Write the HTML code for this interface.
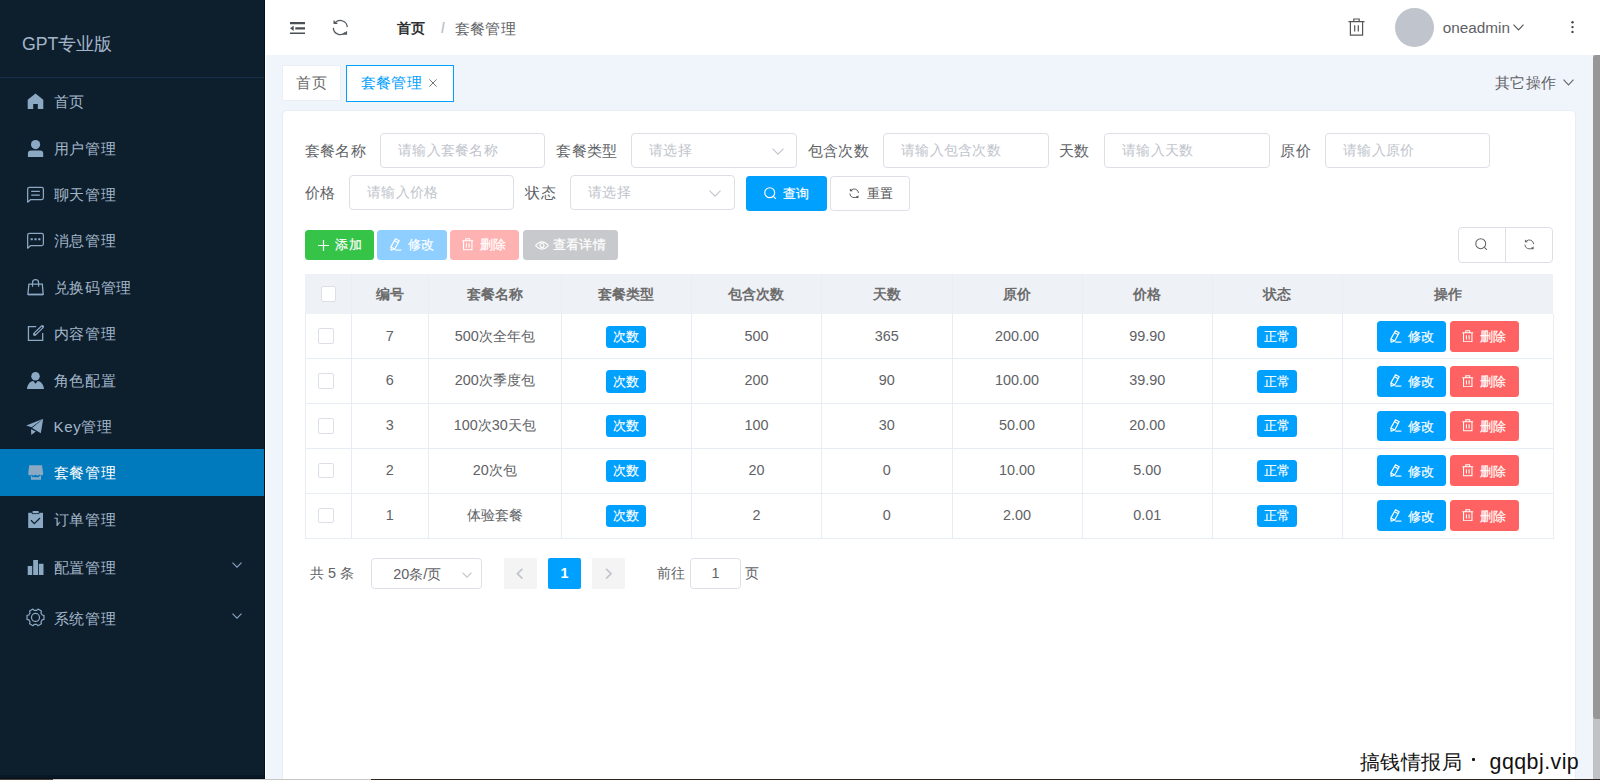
<!DOCTYPE html>
<html lang="zh">
<head>
<meta charset="utf-8">
<title>GPT专业版</title>
<style>
*{box-sizing:border-box;margin:0;padding:0}
html,body{width:1600px;height:780px;overflow:hidden}
body{font-family:"Liberation Sans",sans-serif;background:#f0f4fb;color:#606266;position:relative;font-size:14.4px}
svg{display:block}
.abs{position:absolute}
/* ---------- sidebar ---------- */
#side{position:absolute;left:0;top:0;width:265px;height:780px;background:#0d1e2d}
#logo{position:absolute;left:0;top:0;width:265px;height:78px;border-bottom:1px solid #17304a;color:#a3b6c9;font-size:17.7px;line-height:78px;padding-left:22px;padding-top:5px}
.mi{position:absolute;left:0;width:265px;height:46.4px;color:#a3b6c9;font-size:15px;letter-spacing:0.65px}
.mi.act{background:#0079bd;color:#fff}
.mi .ic{position:absolute;left:27.3px;top:50%;width:16.4px;height:16.4px;margin-top:-7.4px;color:#8aa7c4}
.mi .tx{position:absolute;left:53.6px;top:1.6px;height:100%;display:flex;align-items:center;white-space:nowrap}
.mi .arr{position:absolute;left:232px;top:50%;width:10px;height:6px;margin-top:-5px;color:#8aa7c4}
/* ---------- header ---------- */
#head{position:absolute;left:265px;top:0;width:1335px;height:55px;background:#fff}
#head .hi{position:absolute;color:#4a4a4a}
#bc1{position:absolute;left:131.6px;top:0;height:55px;line-height:57px;font-size:14px;letter-spacing:0.6px;font-weight:bold;color:#303133;white-space:nowrap}
#bcs{position:absolute;left:176px;top:0;height:55px;line-height:56px;font-size:14px;font-weight:bold;color:#c0c4cc}
#bc2{position:absolute;left:189.5px;top:0;height:55px;line-height:57px;font-size:15px;letter-spacing:0.4px;color:#606266;white-space:nowrap}
#avatar{position:absolute;left:1130px;top:7.9px;width:38.8px;height:39px;border-radius:50%;background:#c0c4cc}
#uname{position:absolute;left:1177.8px;top:0;height:55px;line-height:55px;font-size:15.3px;color:#606266;white-space:nowrap}
/* ---------- tabs ---------- */
.tab{position:absolute;top:65px;height:36.5px;background:#fff;font-size:15px;letter-spacing:0.35px;display:flex;align-items:center;white-space:nowrap}
/* ---------- card ---------- */
#card{position:absolute;left:281.5px;top:109.6px;width:1294.5px;height:680px;background:#fff;border-radius:5px;border:1px solid #e9edf6}
.lb{position:absolute;height:34.3px;line-height:36.4px;font-size:15px;letter-spacing:0.4px;color:#606266;white-space:nowrap}
.inp{position:absolute;border:1px solid #dcdfe6;border-radius:4px;background:#fff;font-size:14px;letter-spacing:0.25px;color:#c0c4cc;line-height:33px;padding-left:17px;white-space:nowrap}
.inp svg{position:absolute;right:12.5px;top:13.5px}
.btn{position:absolute;border-radius:3.5px;color:#fff;font-size:13px;letter-spacing:0.3px;white-space:nowrap;display:flex;align-items:center}
.btn .t{position:absolute;top:1px;height:100%;display:flex;align-items:center;-webkit-text-stroke:0.2px currentColor}
.btn svg{position:absolute}
/* table */
#thead{position:absolute;left:305px;top:274px;width:1248px;height:40px;background:#eef1f6}
.th{position:absolute;top:274px;height:40px;line-height:41px;text-align:center;font-weight:bold;font-size:14px;color:#6c6c6c;white-space:nowrap}
.td{position:absolute;height:44.8px;line-height:45.4px;text-align:center;font-size:14.4px;color:#606266;white-space:nowrap}
.vl{position:absolute;top:313.8px;width:1px;height:225.2px;background:#e8ecf5}
.vlh{position:absolute;top:274px;width:1px;height:40px;background:#e9edf4}
.hl{position:absolute;left:305px;width:1248px;height:1px;background:#e8ecf5}
.cb{position:absolute;width:15.5px;height:15.5px;border:1px solid #dcdfe6;border-radius:2px;background:#fff}
.tag{position:absolute;width:39.8px;height:22px;border-radius:3.5px;background:#00a0ff;color:#fff;font-size:13px;letter-spacing:0.3px;line-height:22.6px;text-align:center;white-space:nowrap;-webkit-text-stroke:0.15px #fff}
/* pagination */
.pg{position:absolute;top:558px;height:30.7px;line-height:31px;font-size:14.4px;color:#606266;white-space:nowrap}
</style>
</head>
<body>
<!-- SIDEBAR -->
<div id="side">
  <div id="logo">GPT专业版</div>
  <!--MENU-->
  <div class="mi" style="top:78.0px"><span class="tx">首页</span></div>
  <div class="mi" style="top:124.4px"><span class="tx">用户管理</span></div>
  <div class="mi" style="top:170.8px"><span class="tx">聊天管理</span></div>
  <div class="mi" style="top:217.2px"><span class="tx">消息管理</span></div>
  <div class="mi" style="top:263.6px"><span class="tx">兑换码管理</span></div>
  <div class="mi" style="top:310.0px"><span class="tx">内容管理</span></div>
  <div class="mi" style="top:356.4px"><span class="tx">角色配置</span></div>
  <div class="mi" style="top:402.8px"><span class="tx">Key管理</span></div>
  <div class="mi act" style="top:449.2px"><span class="tx">套餐管理</span></div>
  <div class="mi" style="top:495.6px"><span class="tx">订单管理</span></div>
  <div class="mi" style="top:542.0px;height:50.4px"><span class="tx">配置管理</span><span class="arr"><svg viewBox="0 0 10 6" width="100%" height="100%"><path fill="none" stroke="currentColor" stroke-width="1.1" d="M0.5 0.6 L5 5.2 L9.5 0.6"/></svg></span></div>
  <div class="mi" style="top:592.4px;height:50.4px"><span class="tx">系统管理</span><span class="arr"><svg viewBox="0 0 10 6" width="100%" height="100%"><path fill="none" stroke="currentColor" stroke-width="1.1" d="M0.5 0.6 L5 5.2 L9.5 0.6"/></svg></span></div>
  <svg class="abs" style="left:0;top:0" width="265" height="780" viewBox="0 0 265 780"><path fill="#8ca9c4" d="M27.7 99.8 L35.5 93.5 L43.3 99.8 V109 H37.8 V104 H33.2 V109 H27.7 Z"/><circle cx="35.55" cy="144.55" r="4.6" fill="#8ca9c4"/><path fill="#8ca9c4" d="M27.9 157 V153.6 Q27.9 150.6 30.9 150.6 H40.2 Q43.2 150.6 43.2 153.6 V157 Z"/><path fill="none" stroke="#8ca9c4" stroke-width="1.25" stroke-linejoin="round" d="M27.65 202.2 V189.2 Q27.65 187.4 29.45 187.4 H41.6 Q43.4 187.4 43.4 189.2 V197.8 Q43.4 199.6 41.6 199.6 H30.7 Z"/><path fill="none" stroke="#8ca9c4" stroke-width="1.3"  d="M31.2 191.4 H39.8 M31.2 195.2 H39.8"/><path fill="none" stroke="#8ca9c4" stroke-width="1.25" stroke-linejoin="round" d="M27.65 248.2 V235.2 Q27.65 233.4 29.45 233.4 H41.6 Q43.4 233.4 43.4 235.2 V243.8 Q43.4 245.6 41.6 245.6 H30.7 Z"/><path fill="#8ca9c4" d="M30.6 238.2 H32.8 V240.3 H30.6 Z M34.4 238.2 H36.6 V240.3 H34.4 Z M38.2 238.2 H40.4 V240.3 H38.2 Z"/><path fill="none" stroke="#8ca9c4" stroke-width="1.3"  d="M28.9 284.2 H42.3 L43.2 294.4 H27.9 Z"/><path fill="none" stroke="#8ca9c4" stroke-width="1.6"  d="M28 294.6 H43.1"/><path fill="none" stroke="#8ca9c4" stroke-width="1.2"  d="M32.5 286.8 V282.7 A3.05 3.05 0 0 1 38.6 282.7 V286.8"/><path fill="none" stroke="#8ca9c4" stroke-width="1.3"  d="M36.2 326.6 H28.45 V340.4 H42.7 V333"/><path stroke="#8ca9c4" stroke-width="3.5" stroke-linecap="round" d="M34.9 334 L42.3 326.8"/><path stroke="#0d1e2d" stroke-width="1.1" stroke-linecap="round" d="M35.5 333.4 L41.8 327.3"/><path fill="#8ca9c4" d="M33.2 335.6 L33.6 333.2 L35.8 335.2 Z"/><circle cx="35.5" cy="376.2" r="4.25" fill="#8ca9c4"/><path fill="#8ca9c4" d="M27 389 C27.2 384.5 30 381.4 33.3 380.9 L35.5 383.8 L37.7 380.9 C41 381.4 43.8 384.5 44 389 Z"/><path fill="#8ca9c4" d="M26.2 425.5 L43.2 418.8 L31.6 427.3 Z"/><path fill="#8ca9c4" d="M32.1 427.9 L43.2 418.8 L40.8 433.2 Z"/><path fill="#8ca9c4" d="M31 429.3 L31.3 435 L35.8 431.4 Z"/><path fill="#8ca9c4" d="M29.2 465.2 H42 L43.2 473.6 Q43.2 475.5 41.5 475.5 Q40.2 475.5 39.5 474.4 Q38.8 475.5 37.5 475.5 Q36.2 475.5 35.6 474.4 Q35 475.5 33.7 475.5 Q32.4 475.5 31.8 474.4 Q31.1 475.5 29.9 475.5 Q28.2 475.5 28.2 473.6 Z"/><path fill="#8ca9c4" d="M31 475.7 L32.2 476 V477.3 H39.3 V476 L41 475.7 V479.8 H31 Z"/><path fill="#8ca9c4" d="M28.2 512.8 H43 V528 H28.2 Z"/><path fill="#0d1e2d" d="M31.8 512.6 H39.4 V514.1 H31.8 Z"/><path fill="#8ca9c4" d="M32.6 511 H38.6 V513.3 H32.6 Z"/><path fill="none" stroke="#0d1e2d" stroke-width="1.25" d="M31 520.3 L34.3 523.7 L40 518"/><path fill="#8ca9c4" d="M27.7 566 H32.2 V575 H27.7 Z M33.2 560 H38 V575 H33.2 Z M38.8 563.8 H43.5 V575 H38.8 Z"/><path fill="none" stroke="#8ca9c4" stroke-width="1.2" stroke-linejoin="round" d="M42.17 614.97 L43.98 615.44 L43.98 619.36 L42.17 619.83 L40.94 621.96 L41.43 623.76 L38.04 625.72 L36.73 624.39 L34.27 624.39 L32.96 625.72 L29.57 623.76 L30.06 621.96 L28.83 619.83 L27.02 619.36 L27.02 615.44 L28.83 614.97 L30.06 612.84 L29.57 611.04 L32.96 609.08 L34.27 610.41 L36.73 610.41 L38.04 609.08 L41.43 611.04 L40.94 612.84 Z"/><circle cx="35.5" cy="617.4" r="4" fill="none" stroke="#8ca9c4" stroke-width="1.2"/></svg>
  <!--/MENU-->
</div>
<!-- HEADER -->
<div id="head">
  <!--HEAD-->
  <span class="hi" style="left:24.8px;top:21.8px;width:15.3px;height:12.7px"><svg viewBox="0 0 15.3 12.7" width="100%" height="100%"><path fill="#4b4f56" d="M0 0 H15.3 V2.2 H0 Z M5.3 5.25 H15.3 V7.45 H5.3 Z M0 10.5 H15.3 V12.7 H0 Z M0 6.35 L3.7 3.8 V8.9 Z"/></svg></span>
  <span class="hi" style="left:67.4px;top:19px;width:17px;height:17px"><svg viewBox="0 0 17 17" width="100%" height="100%"><path fill="none" stroke="#555a60" stroke-width="1.25" d="M3.35 3.6 A7 7 0 0 1 15.3 8.1 M1.3 8.9 A7 7 0 0 0 13.25 13.5"/><path fill="#555a60" d="M1.5 0.9 V5.1 H6 Z M15.1 11.8 V15.8 H10.6 Z"/></svg></span>
  <span id="bc1">首页</span><span id="bcs">/</span><span id="bc2">套餐管理</span>
  <span class="hi" style="left:1083px;top:17.5px;width:17px;height:18px"><svg viewBox="0 0 17 18" width="100%" height="100%"><path fill="none" stroke="#555" stroke-width="1.2" d="M0.5 3.6 H16.5 M5.8 3.4 V1 H11.2 V3.4 M2.4 3.8 V17.2 H14.6 V3.8 M6.7 7.2 V13.6 M10.3 7.2 V13.6"/></svg></span>
  <span id="avatar"></span>
  <span id="uname">oneadmin</span>
  <span class="hi" style="left:1247.8px;top:24px;width:11px;height:7px"><svg viewBox="0 0 11 7" width="100%" height="100%"><path fill="none" stroke="#555" stroke-width="1.1" d="M0.5 0.7 L5.5 5.9 L10.5 0.7"/></svg></span>
  <span class="hi" style="left:1305.5px;top:20.8px;width:3px;height:12.2px"><svg viewBox="0 0 3 12.2" width="100%" height="100%"><circle cx="1.5" cy="1.3" r="1.2" fill="#444"/><circle cx="1.5" cy="6.1" r="1.2" fill="#444"/><circle cx="1.5" cy="10.9" r="1.2" fill="#444"/></svg></span>
  <!--/HEAD-->
</div>
<!--TABS-->
<div class="tab" style="left:282px;width:59.2px;top:65.2px;height:36px;color:#6b6b6b;justify-content:center;border:1px solid #ebeef5">首页</div>
<div class="tab" style="left:346px;width:108px;color:#00a0ff;border:1px solid #00a0ff;padding-left:13.8px">套餐管理<svg viewBox="0 0 8 8" width="8" height="8" style="position:absolute;left:82px;top:13px"><path stroke="#777" stroke-width="1" d="M0.4 0.4 L7.6 7.6 M7.6 0.4 L0.4 7.6"/></svg></div>
<div class="abs" style="left:1495px;top:65px;height:36px;line-height:36px;font-size:15px;letter-spacing:0.35px;color:#606266;white-space:nowrap">其它操作</div>
<svg class="abs" style="left:1563px;top:79px" viewBox="0 0 11 7" width="11" height="7"><path fill="none" stroke="#666" stroke-width="1.1" d="M0.5 0.7 L5.5 5.9 L10.5 0.7"/></svg>
<!--/TABS-->
<!--CARD-->
<div id="card"></div>
<div class="lb" style="left:304.6px;top:133px">套餐名称</div>
<div class="inp" style="left:380px;top:133px;width:165px;height:35px">请输入套餐名称</div>
<div class="lb" style="left:556.2px;top:133px">套餐类型</div>
<div class="inp" style="left:631px;top:133px;width:166px;height:35px">请选择<svg viewBox="0 0 12 7" width="12" height="7"><path fill="none" stroke="#c0c4cc" stroke-width="1.1" d="M0.5 0.6 L6 6.2 L11.5 0.6"/></svg></div>
<div class="lb" style="left:807.5px;top:133px">包含次数</div>
<div class="inp" style="left:883px;top:133px;width:166px;height:35px">请输入包含次数</div>
<div class="lb" style="left:1059px;top:133px">天数</div>
<div class="inp" style="left:1104px;top:133px;width:166px;height:35px">请输入天数</div>
<div class="lb" style="left:1280.3px;top:133px">原价</div>
<div class="inp" style="left:1325px;top:133px;width:165px;height:35px">请输入原价</div>
<div class="lb" style="left:304.6px;top:175.4px">价格</div>
<div class="inp" style="left:349.2px;top:175.4px;width:164.6px;height:34.2px">请输入价格</div>
<div class="lb" style="left:525.4px;top:175.4px">状态</div>
<div class="inp" style="left:570px;top:175.4px;width:164.8px;height:34.2px">请选择<svg viewBox="0 0 12 7" width="12" height="7"><path fill="none" stroke="#c0c4cc" stroke-width="1.1" d="M0.5 0.6 L6 6.2 L11.5 0.6"/></svg></div>
<div class="btn" style="left:746.2px;top:176px;width:80.6px;height:34.8px;background:#00a0ff"><svg viewBox="0 0 13 13" width="12.4" height="12.4" style="left:18.2px;top:11.2px"><circle cx="6" cy="6" r="5.2" fill="none" stroke="#fff" stroke-width="1.2"/><path stroke="#fff" stroke-width="1.2" d="M9.9 9.9 L12.4 12.4"/></svg><span class="t" style="left:36.6px">查询</span></div>
<div class="btn" style="left:830.4px;top:176px;width:79.2px;height:34.8px;background:#fff;border:1px solid #dcdfe6;color:#4d4d4d"><svg viewBox="0 0 17 17" width="10.6" height="10.6" style="left:17.4px;top:10.8px"><path fill="none" stroke="#555" stroke-width="1.5" d="M3.35 3.6 A7 7 0 0 1 15.3 8.1 M1.3 8.9 A7 7 0 0 0 13.25 13.5"/><path fill="#555" stroke="none" d="M1.4 0.7 V5.3 H6.2 Z M15.2 11.6 V16 H10.4 Z"/></svg><span class="t" style="left:35.2px;-webkit-text-stroke:0">重置</span></div>
<div class="btn" style="left:305px;top:230px;width:69px;height:30px;background:#35c448"><svg viewBox="0 0 11 11" width="11" height="11" style="left:12.8px;top:9.6px"><path stroke="#fff" stroke-width="1.2" d="M5.5 0 V11 M0 5.5 H11"/></svg><span class="t" style="left:29.8px;top:-0.3px;letter-spacing:0.8px">添加</span></div>
<div class="btn" style="left:377px;top:230px;width:70px;height:30px;background:#8fcfff"><svg viewBox="0 0 12 13" width="12" height="13" style="left:13px;top:8.2px"><path fill="none" stroke="#fff" stroke-width="1.15" stroke-linejoin="round" d="M5.5 0.8 L9.2 2.8 L4.7 11 L1.1 12.2 L0.9 8.9 Z M4.5 2.7 L8.2 4.7 M0.9 8.9 L4.7 11"/><path stroke="#fff" stroke-width="1.15" d="M5.2 12.1 H11.4"/></svg><span class="t" style="left:30.8px;top:-0.3px;letter-spacing:0.6px">修改</span></div>
<div class="btn" style="left:450px;top:230px;width:69px;height:30px;background:#ffb2b2"><svg viewBox="0 0 12 13" width="11.5" height="12.5" style="left:12px;top:8.4px"><path fill="none" stroke="#fff" stroke-width="1.1" d="M0.3 2.8 H11.7 M4 2.6 V0.7 H8 V2.6 M1.6 3 V12.3 H10.4 V3 M4.6 5.4 V9.8 M7.4 5.4 V9.8"/></svg><span class="t" style="left:29.8px;top:-0.3px;letter-spacing:0.6px">删除</span></div>
<div class="btn" style="left:523px;top:230px;width:95px;height:30px;background:#c8c9cc"><svg viewBox="0 0 14 9" width="14" height="9" style="left:11.8px;top:10.6px"><path fill="none" stroke="#fff" stroke-width="1.1" d="M0.6 4.5 Q7 -2.8 13.4 4.5 Q7 11.8 0.6 4.5 Z"/><circle cx="7" cy="4.5" r="2" fill="none" stroke="#fff" stroke-width="1.1"/></svg><span class="t" style="left:29.8px;top:-0.3px;letter-spacing:0.35px">查看详情</span></div>
<div class="abs" style="left:1458.3px;top:227px;width:94.3px;height:35.8px;border:1px solid #dcdfe6;border-radius:4px;background:#fff"></div>
<div class="abs" style="left:1505px;top:227px;width:1px;height:35.8px;background:#dcdfe6"></div>
<div class="btn" style="left:1458px;top:227px;width:47px;height:36px"><svg viewBox="0 0 13 13" width="12.4" height="12.4" style="left:17.4px;top:11px"><circle cx="6" cy="6" r="5.2" fill="none" stroke="#606266" stroke-width="1.1"/><path stroke="#606266" stroke-width="1.1" d="M9.9 9.9 L12.4 12.4"/></svg></div>
<div class="btn" style="left:1505px;top:227px;width:47px;height:36px"><svg viewBox="0 0 17 17" width="10.8" height="10.8" style="left:19px;top:12px"><path fill="none" stroke="#606266" stroke-width="1.5" d="M3.35 3.6 A7 7 0 0 1 15.3 8.1 M1.3 8.9 A7 7 0 0 0 13.25 13.5"/><path fill="#606266" stroke="none" d="M1.4 0.7 V5.3 H6.2 Z M15.2 11.6 V16 H10.4 Z"/></svg></div>
<div id="thead"></div>
<div class="th" style="left:351.5px;width:76.7px">编号</div>
<div class="th" style="left:428.2px;width:133.2px">套餐名称</div>
<div class="th" style="left:561.4px;width:130.0px">套餐类型</div>
<div class="th" style="left:691.4px;width:130.0px">包含次数</div>
<div class="th" style="left:821.4px;width:130.6px">天数</div>
<div class="th" style="left:952px;width:130.2px">原价</div>
<div class="th" style="left:1082.2px;width:130.0px">价格</div>
<div class="th" style="left:1212.2px;width:130.0px">状态</div>
<div class="th" style="left:1342.2px;width:210.8px">操作</div>
<div class="cb" style="left:320.5px;top:286px"></div>
<div class="cb" style="left:318.2px;top:328.4px"></div>
<div class="td" style="left:351.5px;top:313.8px;width:76.7px">7</div>
<div class="td" style="left:428.2px;top:313.8px;width:133.2px">500次全年包</div>
<div class="td" style="left:691.4px;top:313.8px;width:130.0px">500</div>
<div class="td" style="left:821.4px;top:313.8px;width:130.6px">365</div>
<div class="td" style="left:952px;top:313.8px;width:130.2px">200.00</div>
<div class="td" style="left:1082.2px;top:313.8px;width:130.0px">99.90</div>
<div class="tag" style="left:606.2px;top:325.7px">次数</div>
<div class="tag" style="left:1257px;top:325.7px">正常</div>
<div class="btn" style="left:1377px;top:321.0px;width:69px;height:30.8px;background:#00a0ff"><svg viewBox="0 0 12 13" width="12" height="13" style="left:13px;top:8.6px"><path fill="none" stroke="#fff" stroke-width="1.15" stroke-linejoin="round" d="M5.5 0.8 L9.2 2.8 L4.7 11 L1.1 12.2 L0.9 8.9 Z M4.5 2.7 L8.2 4.7 M0.9 8.9 L4.7 11"/><path stroke="#fff" stroke-width="1.15" d="M5.2 12.1 H11.4"/></svg><span class="t" style="left:30.6px">修改</span></div>
<div class="btn" style="left:1450px;top:321.0px;width:69px;height:30.8px;background:#fe6262"><svg viewBox="0 0 12 13" width="11.5" height="12.5" style="left:12px;top:8.8px"><path fill="none" stroke="#fff" stroke-width="1.1" d="M0.3 2.8 H11.7 M4 2.6 V0.7 H8 V2.6 M1.6 3 V12.3 H10.4 V3 M4.6 5.4 V9.8 M7.4 5.4 V9.8"/></svg><span class="t" style="left:29.8px">删除</span></div>
<div class="cb" style="left:318.2px;top:373.2px"></div>
<div class="td" style="left:351.5px;top:357.8px;width:76.7px">6</div>
<div class="td" style="left:428.2px;top:357.8px;width:133.2px">200次季度包</div>
<div class="td" style="left:691.4px;top:357.8px;width:130.0px">200</div>
<div class="td" style="left:821.4px;top:357.8px;width:130.6px">90</div>
<div class="td" style="left:952px;top:357.8px;width:130.2px">100.00</div>
<div class="td" style="left:1082.2px;top:357.8px;width:130.0px">39.90</div>
<div class="tag" style="left:606.2px;top:370.0px;height:22.8px;line-height:23.6px">次数</div>
<div class="tag" style="left:1257px;top:370.0px;height:22.8px;line-height:23.6px">正常</div>
<div class="btn" style="left:1377px;top:365.8px;width:69px;height:30.8px;background:#00a0ff"><svg viewBox="0 0 12 13" width="12" height="13" style="left:13px;top:8.6px"><path fill="none" stroke="#fff" stroke-width="1.15" stroke-linejoin="round" d="M5.5 0.8 L9.2 2.8 L4.7 11 L1.1 12.2 L0.9 8.9 Z M4.5 2.7 L8.2 4.7 M0.9 8.9 L4.7 11"/><path stroke="#fff" stroke-width="1.15" d="M5.2 12.1 H11.4"/></svg><span class="t" style="left:30.6px">修改</span></div>
<div class="btn" style="left:1450px;top:365.8px;width:69px;height:30.8px;background:#fe6262"><svg viewBox="0 0 12 13" width="11.5" height="12.5" style="left:12px;top:8.8px"><path fill="none" stroke="#fff" stroke-width="1.1" d="M0.3 2.8 H11.7 M4 2.6 V0.7 H8 V2.6 M1.6 3 V12.3 H10.4 V3 M4.6 5.4 V9.8 M7.4 5.4 V9.8"/></svg><span class="t" style="left:29.8px">删除</span></div>
<div class="cb" style="left:318.2px;top:418.0px"></div>
<div class="td" style="left:351.5px;top:403.4px;width:76.7px">3</div>
<div class="td" style="left:428.2px;top:403.4px;width:133.2px">100次30天包</div>
<div class="td" style="left:691.4px;top:403.4px;width:130.0px">100</div>
<div class="td" style="left:821.4px;top:403.4px;width:130.6px">30</div>
<div class="td" style="left:952px;top:403.4px;width:130.2px">50.00</div>
<div class="td" style="left:1082.2px;top:403.4px;width:130.0px">20.00</div>
<div class="tag" style="left:606.2px;top:415.3px">次数</div>
<div class="tag" style="left:1257px;top:415.3px">正常</div>
<div class="btn" style="left:1377px;top:410.6px;width:69px;height:30.8px;background:#00a0ff"><svg viewBox="0 0 12 13" width="12" height="13" style="left:13px;top:8.6px"><path fill="none" stroke="#fff" stroke-width="1.15" stroke-linejoin="round" d="M5.5 0.8 L9.2 2.8 L4.7 11 L1.1 12.2 L0.9 8.9 Z M4.5 2.7 L8.2 4.7 M0.9 8.9 L4.7 11"/><path stroke="#fff" stroke-width="1.15" d="M5.2 12.1 H11.4"/></svg><span class="t" style="left:30.6px">修改</span></div>
<div class="btn" style="left:1450px;top:410.6px;width:69px;height:30.8px;background:#fe6262"><svg viewBox="0 0 12 13" width="11.5" height="12.5" style="left:12px;top:8.8px"><path fill="none" stroke="#fff" stroke-width="1.1" d="M0.3 2.8 H11.7 M4 2.6 V0.7 H8 V2.6 M1.6 3 V12.3 H10.4 V3 M4.6 5.4 V9.8 M7.4 5.4 V9.8"/></svg><span class="t" style="left:29.8px">删除</span></div>
<div class="cb" style="left:318.2px;top:462.8px"></div>
<div class="td" style="left:351.5px;top:448.2px;width:76.7px">2</div>
<div class="td" style="left:428.2px;top:448.2px;width:133.2px">20次包</div>
<div class="td" style="left:691.4px;top:448.2px;width:130.0px">20</div>
<div class="td" style="left:821.4px;top:448.2px;width:130.6px">0</div>
<div class="td" style="left:952px;top:448.2px;width:130.2px">10.00</div>
<div class="td" style="left:1082.2px;top:448.2px;width:130.0px">5.00</div>
<div class="tag" style="left:606.2px;top:460.1px">次数</div>
<div class="tag" style="left:1257px;top:460.1px">正常</div>
<div class="btn" style="left:1377px;top:455.4px;width:69px;height:30.8px;background:#00a0ff"><svg viewBox="0 0 12 13" width="12" height="13" style="left:13px;top:8.6px"><path fill="none" stroke="#fff" stroke-width="1.15" stroke-linejoin="round" d="M5.5 0.8 L9.2 2.8 L4.7 11 L1.1 12.2 L0.9 8.9 Z M4.5 2.7 L8.2 4.7 M0.9 8.9 L4.7 11"/><path stroke="#fff" stroke-width="1.15" d="M5.2 12.1 H11.4"/></svg><span class="t" style="left:30.6px">修改</span></div>
<div class="btn" style="left:1450px;top:455.4px;width:69px;height:30.8px;background:#fe6262"><svg viewBox="0 0 12 13" width="11.5" height="12.5" style="left:12px;top:8.8px"><path fill="none" stroke="#fff" stroke-width="1.1" d="M0.3 2.8 H11.7 M4 2.6 V0.7 H8 V2.6 M1.6 3 V12.3 H10.4 V3 M4.6 5.4 V9.8 M7.4 5.4 V9.8"/></svg><span class="t" style="left:29.8px">删除</span></div>
<div class="cb" style="left:318.2px;top:507.6px"></div>
<div class="td" style="left:351.5px;top:493.0px;width:76.7px">1</div>
<div class="td" style="left:428.2px;top:493.0px;width:133.2px">体验套餐</div>
<div class="td" style="left:691.4px;top:493.0px;width:130.0px">2</div>
<div class="td" style="left:821.4px;top:493.0px;width:130.6px">0</div>
<div class="td" style="left:952px;top:493.0px;width:130.2px">2.00</div>
<div class="td" style="left:1082.2px;top:493.0px;width:130.0px">0.01</div>
<div class="tag" style="left:606.2px;top:504.9px">次数</div>
<div class="tag" style="left:1257px;top:504.9px">正常</div>
<div class="btn" style="left:1377px;top:500.2px;width:69px;height:30.8px;background:#00a0ff"><svg viewBox="0 0 12 13" width="12" height="13" style="left:13px;top:8.6px"><path fill="none" stroke="#fff" stroke-width="1.15" stroke-linejoin="round" d="M5.5 0.8 L9.2 2.8 L4.7 11 L1.1 12.2 L0.9 8.9 Z M4.5 2.7 L8.2 4.7 M0.9 8.9 L4.7 11"/><path stroke="#fff" stroke-width="1.15" d="M5.2 12.1 H11.4"/></svg><span class="t" style="left:30.6px">修改</span></div>
<div class="btn" style="left:1450px;top:500.2px;width:69px;height:30.8px;background:#fe6262"><svg viewBox="0 0 12 13" width="11.5" height="12.5" style="left:12px;top:8.8px"><path fill="none" stroke="#fff" stroke-width="1.1" d="M0.3 2.8 H11.7 M4 2.6 V0.7 H8 V2.6 M1.6 3 V12.3 H10.4 V3 M4.6 5.4 V9.8 M7.4 5.4 V9.8"/></svg><span class="t" style="left:29.8px">删除</span></div>
<div class="vl" style="left:305.0px"></div>
<div class="vl" style="left:351.0px"></div>
<div class="vlh" style="left:351.0px"></div>
<div class="vl" style="left:427.7px"></div>
<div class="vlh" style="left:427.7px"></div>
<div class="vl" style="left:560.9px"></div>
<div class="vlh" style="left:560.9px"></div>
<div class="vl" style="left:690.9px"></div>
<div class="vlh" style="left:690.9px"></div>
<div class="vl" style="left:820.9px"></div>
<div class="vlh" style="left:820.9px"></div>
<div class="vl" style="left:951.5px"></div>
<div class="vlh" style="left:951.5px"></div>
<div class="vl" style="left:1081.7px"></div>
<div class="vlh" style="left:1081.7px"></div>
<div class="vl" style="left:1211.7px"></div>
<div class="vlh" style="left:1211.7px"></div>
<div class="vl" style="left:1341.7px"></div>
<div class="vlh" style="left:1341.7px"></div>
<div class="vl" style="left:1552.5px"></div>
<div class="hl" style="top:358.1px"></div>
<div class="hl" style="top:402.9px"></div>
<div class="hl" style="top:447.7px"></div>
<div class="hl" style="top:492.5px"></div>
<div class="hl" style="top:538.0px"></div>
<div class="pg" style="left:310px">共 5 条</div>
<div class="pg" style="left:371.2px;width:110.6px;border:1px solid #dcdfe6;border-radius:3.5px;line-height:30px;padding-left:21px;background:#fff">20条/页<svg viewBox="0 0 10 6" width="10" height="6" style="position:absolute;right:8.6px;top:13px"><path fill="none" stroke="#c0c4cc" stroke-width="1.1" d="M0.5 0.6 L5 5.2 L9.5 0.6"/></svg></div>
<div class="pg" style="left:504px;width:33.2px;background:#f4f4f5;border-radius:2px"><svg viewBox="0 0 7.5 11.4" width="7.5" height="11.4" style="position:absolute;left:12.4px;top:9.5px"><path fill="none" stroke="#c0c4cc" stroke-width="1.7" d="M6.4 0.8 L1.4 5.7 L6.4 10.6"/></svg></div>
<div class="pg" style="left:547.8px;width:33.2px;background:#00a0ff;border-radius:2px;color:#fff;font-weight:bold;text-align:center;font-size:14.4px">1</div>
<div class="pg" style="left:591.8px;width:33.2px;background:#f4f4f5;border-radius:2px"><svg viewBox="0 0 7.5 11.4" width="7.5" height="11.4" style="position:absolute;left:13px;top:9.5px"><path fill="none" stroke="#c0c4cc" stroke-width="1.7" d="M1.1 0.8 L6.1 5.7 L1.1 10.6"/></svg></div>
<div class="pg" style="left:657.3px">前往</div>
<div class="pg" style="left:690.3px;width:50.4px;border:1px solid #dcdfe6;border-radius:3.5px;text-align:center;line-height:29px;background:#fff">1</div>
<div class="pg" style="left:745.4px">页</div>
<!--/CARD-->
<!--OVERLAYS-->
<div class="abs" style="left:1593px;top:55px;width:7px;height:725px;background:#c1c2c6"></div>
<div class="abs" style="left:1593px;top:55px;width:7px;height:663.5px;background:#979797;border-radius:3.5px 0 0 3.5px"></div>
<div class="abs" style="left:1359.6px;top:747px;height:30px;line-height:30px;font-size:20px;color:#111;white-space:nowrap;letter-spacing:0.6px">搞钱情报局</div>
<div class="abs" style="left:1472px;top:758px;width:3px;height:3px;border-radius:1px;background:#111"></div>
<div class="abs" style="left:1489.6px;top:747.3px;height:30px;line-height:30px;font-size:21.4px;letter-spacing:0.44px;color:#111;white-space:nowrap">gqqbj.vip</div>
<div class="abs" style="left:264px;top:0;width:1px;height:779px;background:#03101d"></div>
<div class="abs" style="left:265px;top:55px;width:1px;height:724px;background:#fff"></div>
<div class="abs" style="left:0;top:775px;width:264px;height:3px;background:#0a1825"></div>
<div class="abs" style="left:0;top:778px;width:264px;height:1px;background:#04111e"></div>
<div class="abs" style="left:0;top:779px;width:1600px;height:1px;background:#2e261c"></div>
<div class="abs" style="left:0;top:779px;width:53px;height:1px;background:#4a4033"></div>
<div class="abs" style="left:53px;top:779px;width:318px;height:1px;background:#c8c6c3"></div>
<!--/OVERLAYS-->
</body>
</html>
